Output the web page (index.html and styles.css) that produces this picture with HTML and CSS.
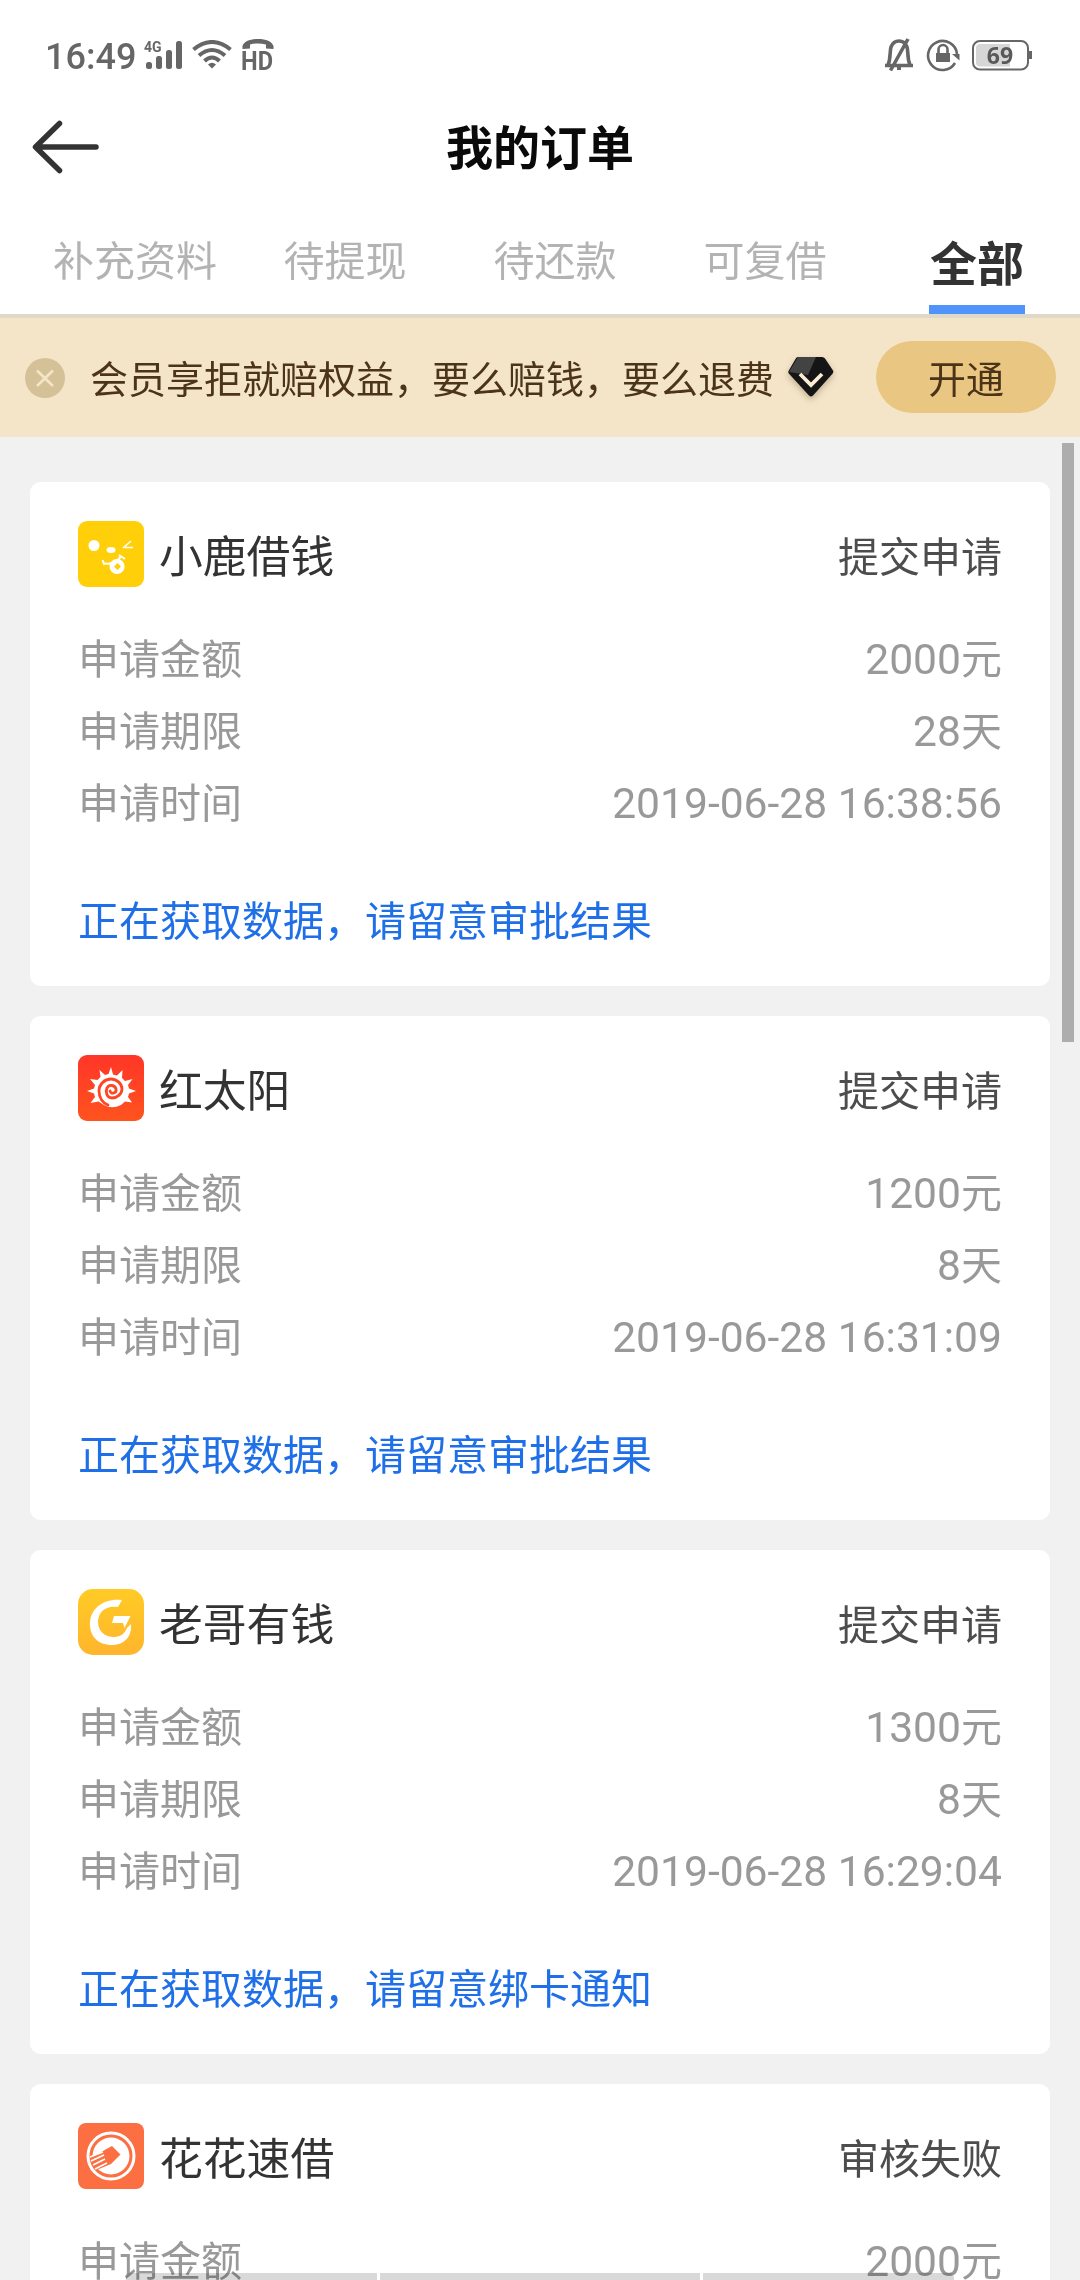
FILE: index.html
```html
<!DOCTYPE html>
<html lang="zh-CN">
<head>
<meta charset="utf-8">
<title>我的订单</title>
<link rel="stylesheet" href="styles.css">
</head>
<body>
<div class="screen">
  <header class="statusbar">
    <div class="status-left">
      <span class="clock">16:49</span>
      <svg class="signal" width="39" height="32" viewBox="0 0 39 32" fill="#666">
        <text x="0" y="12.5" class="net">4G</text>
        <rect x="2" y="23" width="6" height="7" rx="2.5"/><rect x="12" y="17" width="6" height="13" rx="2.5"/><rect x="22" y="11" width="6" height="19" rx="2.5"/><rect x="32" y="2" width="6" height="28" rx="2.5"/>
      </svg>
      <svg class="wifi" width="40" height="30" viewBox="0 0 40 30" fill="none" stroke="#666" stroke-width="4">
        <path d="M1.5 9.5Q20-5.500 38.500 9.500"/><path d="M7 15.500Q20 4.500 33 15.500"/><path d="M12.500 21Q20 14 27.500 21"/><path d="M16 24.500Q20 21 24 24.500L20 28.500Z" fill="#666" stroke="none"/>
      </svg>
      <svg class="hd" width="32" height="36" viewBox="0 0 32 36" fill="#666">
        <path d="M.5 10V7C2 2.500 8 0 16 0s14 2.500 15.500 7v3L24 9.500V5.500C19 4 13 4 8 5.500v4z"/>
        <text x="-1" y="31" class="hd-text" textLength="32" lengthAdjust="spacingAndGlyphs">HD</text>
      </svg>
    </div>
    <div class="status-right">
      <svg width="30" height="34" viewBox="0 0 30 34" fill="none" stroke="#666" stroke-width="3.6">
        <path d="M1 27.500h28M4 27C7 20 5.500 14 7 9c1.500-4 4-6 8-6s6.500 2 8 6c1.500 5 0 11 3 18M6.500 32.500L24 1"/><path d="M15 29v3" stroke-width="4"/>
      </svg>
      <svg width="34" height="34" viewBox="0 0 34 34" fill="none" stroke="#666" stroke-width="2.600">
        <path d="M31 16A14.500 14.500 0 1 0 29 25"/><path d="M26 16h7.500v6.500z" fill="#666" stroke="none"/><rect x="10" y="15" width="14" height="9" fill="#666" stroke="none"/><path d="M12.500 16v-4.500a4.500 4.500 0 0 1 9 0V16"/>
      </svg>
      <svg width="60" height="31" viewBox="0 0 60 31">
        <rect x="1" y="1" width="55" height="28.500" rx="7" fill="none" stroke="#666" stroke-width="2"/><path d="M8 4h30v22.500H8a4 4 0 0 1-4-4V8a4 4 0 0 1 4-4z" fill="#d6d6d6"/><rect x="57" y="11" width="3" height="8" fill="#666"/><text x="28" y="24" class="level">69</text>
      </svg>
    </div>
  </header>

  <div class="titlebar">
    <svg class="back" width="68" height="54" viewBox="0 0 68 54" fill="none" stroke="#333" stroke-width="5.500" stroke-linecap="round" stroke-linejoin="round"><path d="M27.500 3.500L3.500 27l24 23.500M4 27h60"/></svg>
    <h1>我的订单</h1>
  </div>

  <nav class="tabs">
    <a class="tab">补充资料</a><a class="tab">待提现</a><a class="tab">待还款</a><a class="tab">可复借</a><a class="tab active">全部</a>
  </nav>

  <section class="banner">
    <svg class="close" width="40" height="40" viewBox="0 0 40 40"><circle cx="20" cy="20" r="20" fill="#d5c197"/><path d="M12 12.500l16 15.500M28 12.500L12 28" stroke="#f5e5c7" stroke-width="2.600"/></svg>
    <span class="banner-text">会员享拒就赔权益，要么赔钱，要么退费</span>
    <svg class="gem" width="46" height="40" viewBox="0 0 46 40"><path d="M10 0h24q2 0 3 1.500l8 12q.8 1.500-.3 3L25 38.500q-2 2-4 0L.8 16.500q-1-1.500 0-3l7-12Q8.500 0 10 0z" fill="#151515"/><path d="M10 0h18l-8 18L1 15z" fill="#434343"/><path d="M12 17l11 11 11-11" fill="none" stroke="#fbecd3" stroke-width="3.800"/></svg>
    <button class="open">开通</button>
  </section>

  <main class="orders">
    <article class="card">
      <div class="head">
        <svg class="logo" viewBox="0 0 66 66"><rect width="66" height="66" rx="9" fill="#ffd00a"/><g fill="#fff"><circle cx="16" cy="24.500" r="5.500"/><ellipse cx="33" cy="29" rx="4.500" ry="3"/><path fill-rule="evenodd" d="M39 38a7.500 7.500 0 1 0 .1 0zM39.500 42l3.500 3.500-3.500 3.500-3.500-3.500z"/></g><path d="M25 42c8 2 15-1 18-7M24.500 39l2 5M41 34l6 4" fill="none" stroke="#fff" stroke-width="2"/><path d="M53 20l-8 7M47 26.500h8" fill="none" stroke="#fff" stroke-width="1.500"/></svg>
        <h2>小鹿借钱</h2><span class="state">提交申请</span>
      </div>
      <dl><div><dt>申请金额</dt><dd>2000<span class="unit">元</span></dd></div><div><dt>申请期限</dt><dd>28<span class="unit">天</span></dd></div><div><dt>申请时间</dt><dd>2019-06-28 16:38:56</dd></div></dl>
      <p class="note">正在获取数据，请留意审批结果</p>
    </article>
    <article class="card">
      <div class="head">
        <svg class="logo" viewBox="0 0 66 66"><defs><linearGradient id="red" x2="0" y2="1"><stop stop-color="#ff3628"/><stop offset="1" stop-color="#ff531e"/></linearGradient></defs><rect width="66" height="66" rx="9" fill="url(#red)"/>
          <path fill="#fff" d="M33 12l2 7.500 4 1 5.500-5.500-.5 8 3 3 7.500-2-4.500 6 1 3.500 7 2.500-7 2.500-1 3.500 4 5.500-7-1-4 3.500q-9 4.500-17 0L20.500 46.500l-8 1.500 4.500-6-1-3.500-7-2.500 7-2.500 1-3.500-5-6 7.500 1 3-3-1-7 5.500 5 3.500-1z"/>
          <path fill="none" stroke="#ff4423" stroke-width="2.800" stroke-linecap="round" d="M32 36c1 4 7 2 6-2s-7-5-9-1 0 10 5 10 10-4 10-9-5-10-11-10-12 5-12 12 4 12 9 14"/></svg>
        <h2>红太阳</h2><span class="state">提交申请</span>
      </div>
      <dl><div><dt>申请金额</dt><dd>1200<span class="unit">元</span></dd></div><div><dt>申请期限</dt><dd>8<span class="unit">天</span></dd></div><div><dt>申请时间</dt><dd>2019-06-28 16:31:09</dd></div></dl>
      <p class="note">正在获取数据，请留意审批结果</p>
    </article>
    <article class="card">
      <div class="head">
        <svg class="logo" viewBox="0 0 66 66"><defs><linearGradient id="gold" x2="0" y2="1"><stop stop-color="#ffcb25"/><stop offset="1" stop-color="#ffb52d"/></linearGradient></defs><rect width="66" height="66" rx="15" fill="url(#gold)"/>
          <path fill="#fff" d="M44 11l-4 7C28 16 20 23 20 33c0 9 7 15 16 15 7 0 11-4 13-9l4-4c1 12-6 21-19 21C20 56 11 47 12 33 13 19 26 9 44 11z"/><path fill="#fff" d="M36 27h16.500l-6 12-1.500-5H34z"/></svg>
        <h2>老哥有钱</h2><span class="state">提交申请</span>
      </div>
      <dl><div><dt>申请金额</dt><dd>1300<span class="unit">元</span></dd></div><div><dt>申请期限</dt><dd>8<span class="unit">天</span></dd></div><div><dt>申请时间</dt><dd>2019-06-28 16:29:04</dd></div></dl>
      <p class="note">正在获取数据，请留意绑卡通知</p>
    </article>
    <article class="card">
      <div class="head">
        <svg class="logo" viewBox="0 0 66 66"><rect width="66" height="66" rx="8" fill="#fb6f43"/><circle cx="33" cy="33" r="23" fill="none" stroke="#fff" stroke-width="3"/><circle cx="33" cy="33" r="18.500" fill="#fff"/>
          <path fill="#fb6f43" d="M34 23l8.500 8.500L33 41l-12 5-5-1-4-10z"/><path stroke="#fff" stroke-width="1.600" d="M12 34l13-5M13 38l13-6M15 42l12-6M17 46l12-6"/></svg>
        <h2>花花速借</h2><span class="state">审核失败</span>
      </div>
      <dl><div><dt>申请金额</dt><dd>2000<span class="unit">元</span></dd></div></dl>
    </article>
  </main>
  <div class="scrollbar"></div>
  <div class="gesture"><i></i><i></i><i></i></div>
</div>
</body>
</html>
```
FILE: styles.css
```css
* { box-sizing: border-box; margin: 0; padding: 0; }
body { background: #f1f1f1; font-family: Roboto, "Noto Sans CJK SC", sans-serif; }
.screen { position: relative; width: 1080px; height: 2280px; overflow: hidden; background: #f1f1f1; }

.statusbar { display: flex; justify-content: space-between; height: 110px; padding: 38px 48px 0 45px; background: #fff; }
.status-left, .status-right { display: flex; align-items: flex-start; }
.clock { width: 99px; font-size: 36px; line-height: 38px; font-weight: 500; color: #666; }
.signal { margin-top: 1px; }
.net { font: 700 14px Roboto, sans-serif; }
.wifi { margin: 2px 0 0 9px; }
.hd { margin: 1px 0 0 10px; overflow: visible; }
.hd-text { font: 700 26px Roboto, sans-serif; }
.status-right { gap: 12px; }
.status-right svg:last-child { margin: 2px 0 0; }
.level { font: 700 23px "Noto Sans", sans-serif; fill: #595959; text-anchor: middle; }

.titlebar { display: grid; grid-template-columns: 100px 1fr 100px; align-items: center; height: 74px; background: #fff; }
.back { margin-left: 32px; }
h1 { padding: 3px 0 0; text-align: center; font-size: 47px; line-height: 71px; font-weight: 700; color: #0a0a0a; }

.tabs { display: flex; height: 130px; padding-left: 30px; background: #fff; }
.tab { width: 210px; text-align: center; font-size: 41px; line-height: 156px; color: #b3b3b3; }
.tab.active { display: flex; flex-direction: column; align-items: center; justify-content: flex-end; padding-left: 4px; font-size: 47px; font-weight: 700; line-height: 80px; color: #333; }
.tab.active::after { content: ""; flex: none; width: 96px; height: 9px; background: #5093fb; }

.banner { display: flex; align-items: center; height: 123px; padding: 0 24px 0 25px; background: #f5e5c8; border-top: 4px solid #dedac7; }
.banner > * { margin-top: -2px; }
.banner .close { margin-top: 0; }
.banner-text { margin-left: 25px; font-size: 38px; color: #4b3418; }
.gem { margin-left: 14px; filter: drop-shadow(0 3px 3px #8c7c6080); }
.open { margin-left: auto; width: 180px; height: 72px; border: 0; border-radius: 36px; background: #e9c681; font: 38px Roboto, "Noto Sans CJK SC", sans-serif; color: #4b3418; }

.orders { display: flex; flex-direction: column; gap: 30px; padding: 45px 30px 0; }
.card { height: 504px; flex: none; padding: 39px 48px 0; border-radius: 11px; background: #fff; }
.head { display: flex; align-items: center; height: 66px; }
.logo { width: 66px; height: 66px; }
h2 { margin-left: 15px; padding-top: 8px; font-size: 43.8px; font-weight: 400; line-height: 66px; color: #333; }
.state { margin-left: auto; font-size: 41px; color: #4d4d4d; }
dl { margin-top: 37px; }
dl div { display: flex; justify-content: space-between; height: 72px; line-height: 72px; font-size: 41px; color: #999; }
dd { font-size: 42.6px; line-height: 70px; }
.unit { font-size: 41px; line-height: 1; }
.note { margin-top: 46px; font-size: 41px; line-height: 72px; color: #1f70e8; }

.scrollbar { position: absolute; left: 1062px; top: 443px; width: 12px; height: 599px; background: #adadad; }
.gesture { position: absolute; left: 126px; top: 2273px; width: 828px; height: 7px; display: grid; grid-template-columns: 251px 320px 251px; gap: 3px; mix-blend-mode: multiply; }
.gesture i { background: #d9d9d9; }
.gesture i:first-child { border-top-left-radius: 5px; }
.gesture i:last-child { border-top-right-radius: 5px; }
```
